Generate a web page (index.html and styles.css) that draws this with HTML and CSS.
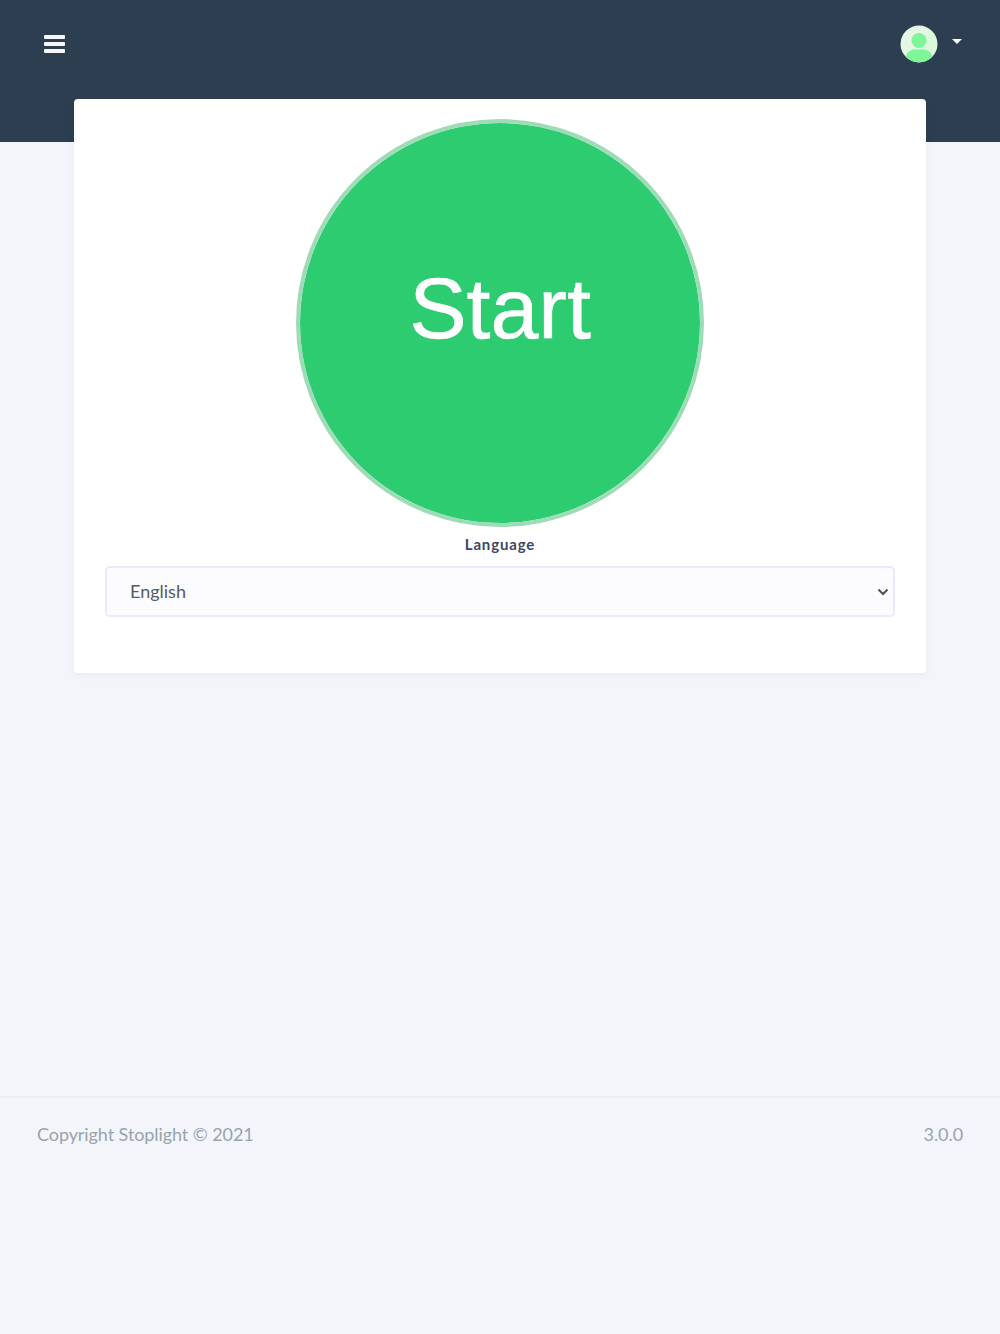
FILE: index.html
```html
<!DOCTYPE html>
<html lang="en">
<head>
  <meta charset="UTF-8">
  <meta name="viewport" content="width=device-width, initial-scale=1.0">
  <title>Stoplight</title>
  <link rel="stylesheet" href="styles.css">
</head>
<body>
  <div class="page">
    <header class="topbar">
      <button class="menu-btn" aria-label="Menu">
        <span></span>
        <span></span>
        <span></span>
      </button>
      <div class="user-menu">
        <svg class="avatar" viewBox="0 0 38 38" width="38" height="38">
          <circle cx="19" cy="19" r="18.5" fill="#dcf8dc"/>
          <path d="M1 19A18 18 0 0 1 30 5L5 30A18 18 0 0 1 1 19Z" fill="#e6f6e6"/>
          <circle cx="19" cy="15.5" r="7.5" fill="#7ff59a"/>
          <path d="M6 32C6 27 11 24.500 15 24.500H23C27 24.500 32 27 32 32A18.500 18.500 0 0 1 6 32Z" fill="#7ff59a"/>
        </svg>
        <span class="caret"></span>
      </div>
    </header>

    <main class="content">
      <div class="card">
        <button class="start-btn">Start</button>
        <label class="lang-label" for="language">Language</label>
        <div class="select-wrap">
          <select class="lang-select" id="language">
            <option>English</option>
          </select>
          <svg class="select-arrow" viewBox="0 0 12 8" width="12" height="8">
            <path d="M1.500 1.500L6 6L10.500 1.500" fill="none" stroke="#4a5058" stroke-width="2"/>
          </svg>
        </div>
      </div>
    </main>

    <footer class="footer">
      <span>Copyright Stoplight © 2021</span>
      <span>3.0.0</span>
    </footer>
  </div>
</body>
</html>
```
FILE: styles.css
```css
* {
  margin: 0;
  padding: 0;
  box-sizing: border-box;
}

body {
  background-color: #f4f5fa;
  font-family: 'Lato', 'Noto Sans', sans-serif;
  min-height: 1334px;
}

/* Header */
.topbar {
  background-color: #2c3e50;
  height: 142px;
  padding: 25px 38px 0 44px;
  display: flex;
  justify-content: space-between;
  align-items: flex-start;
}

.menu-btn {
  background: none;
  border: none;
  width: 21px;
  height: 18px;
  margin-top: 10px;
  display: flex;
  flex-direction: column;
  justify-content: space-between;
}

.menu-btn span {
  display: block;
  height: 4px;
  background-color: #f6f7f8;
  border-radius: 1px;
}

.user-menu {
  display: flex;
  align-items: flex-start;
  gap: 14px;
}

.avatar {
  display: block;
}

.caret {
  width: 0;
  height: 0;
  margin-top: 14px;
  border-top: 5px solid #fff;
  border-left: 5px solid transparent;
  border-right: 5px solid transparent;
}

/* Card */
.content {
  display: flow-root;
  height: 954px;
  padding: 0 74px;
}

.card {
  background-color: #fff;
  height: 574px;
  margin-top: -43px;
  position: relative;
  border-radius: 4px;
  box-shadow: 0 2px 10px rgba(44, 62, 80, 0.06);
  padding: 20px 31px 0;
  display: flex;
  flex-direction: column;
  align-items: center;
}

.start-btn {
  width: 408px;
  height: 408px;
  flex-shrink: 0;
  border-radius: 50%;
  border: 4px solid #9ddcb6;
  background-color: #2ecc71;
  background-clip: padding-box;
  color: #fff;
  font-family: 'Liberation Sans', Arial, sans-serif;
  font-size: 86px;
  line-height: 96px;
  padding-bottom: 30px;
  -webkit-text-stroke: 0.6px #fff;
}

.lang-label {
  margin-top: 7px;
  height: 20px;
  font-size: 15px;
  line-height: 20px;
  font-weight: 700;
  letter-spacing: 0.85px;
  color: #3e4669;
}

.select-wrap {
  position: relative;
  width: 100%;
  margin-top: 12px;
}

.lang-select {
  display: block;
  width: 100%;
  height: 51px;
  padding: 0 23px 2px;
  appearance: none;
  font-family: inherit;
  font-size: 18px;
  color: #555b62;
  background-color: #fcfcff;
  border: 2px solid #e9ebfd;
  border-radius: 5px;
}

.select-arrow {
  position: absolute;
  right: 6px;
  top: 22px;
  pointer-events: none;
}

/* Footer */
.footer {
  border-top: 2px solid #ebedf2;
  padding: 24px 37px 0;
  display: flex;
  justify-content: space-between;
  font-size: 18px;
  line-height: 24px;
  letter-spacing: -0.08px;
  color: #97a4aa;
}
```
